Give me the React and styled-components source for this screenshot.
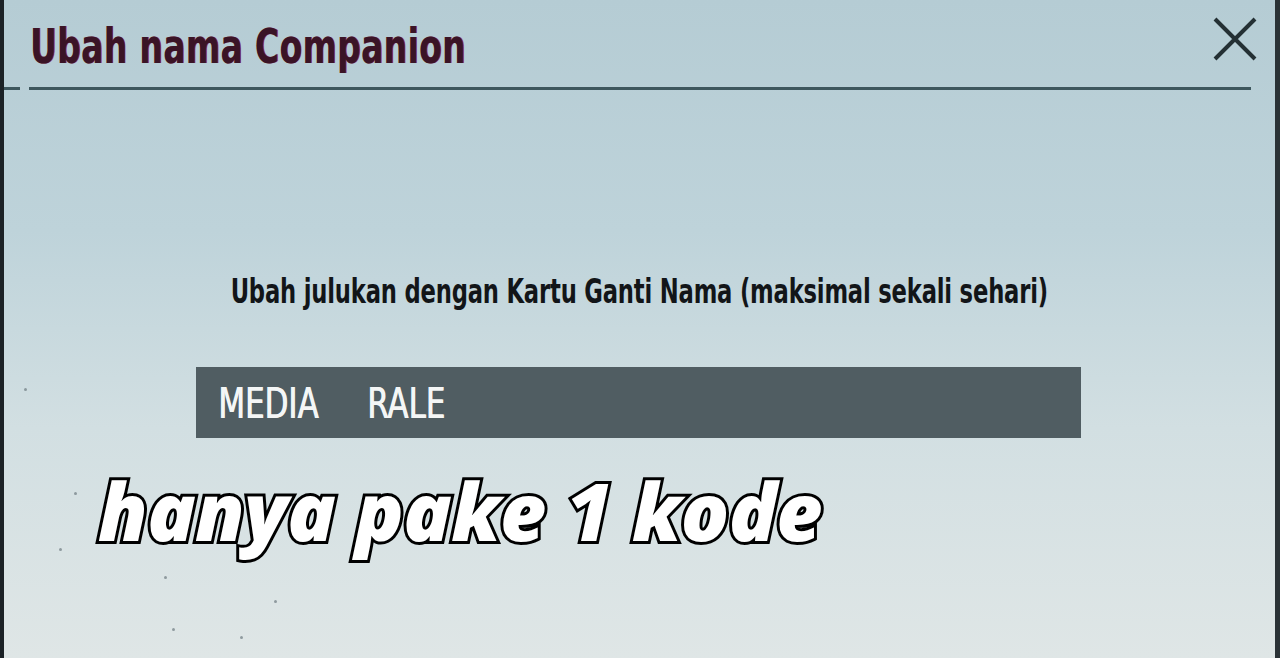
import React from "react";
import styled, { createGlobalStyle } from "styled-components";

const GlobalStyle = createGlobalStyle`
  html, body {
    margin: 0;
    padding: 0;
    width: 1280px;
    height: 658px;
    overflow: hidden;
  }
`;

const Screen = styled.div`
  position: relative;
  width: 1280px;
  height: 658px;
  box-sizing: border-box;
  background: linear-gradient(180deg, #b5ccd4 0%, #bed3da 35%, #d2dfe2 65%, #dfe6e6 100%);
  border-left: 4px solid #1c2226;
  border-right: 5px solid #2a3236;
  display: flex;
  flex-direction: column;
  overflow: hidden;
`;

const Header = styled.div`
  display: flex;
  align-items: center;
  justify-content: space-between;
  height: 86px;
  padding: 0 14px 0 26px;
`;

const Title = styled.h1`
  margin: 0;
  margin-top: 6px;
  font-family: "DejaVu Sans Condensed", "DejaVu Sans", sans-serif;
  font-weight: 700;
  font-size: 41px;
  letter-spacing: 0.5px;
  color: #3a1426;
  text-shadow: 1px 0 0 #8c2c48;
  transform: scale(0.89, 1.18);
  transform-origin: left center;
`;

const CloseButton = styled.button`
  width: 52px;
  height: 52px;
  border: none;
  background: none;
  padding: 0;
  margin-top: -8px;
  cursor: pointer;
`;

const Divider = styled.div`
  display: flex;
  align-items: center;
  gap: 9px;
  height: 4px;

  &::before {
    content: "";
    width: 16px;
    height: 3px;
    background: #3e575e;
  }
  &::after {
    content: "";
    width: 1222px;
    height: 3px;
    background: #3e575e;
  }
`;

const Body = styled.div`
  flex: 1;
  display: flex;
  flex-direction: column;
  align-items: center;
  padding-top: 186px;
`;

const Hint = styled.p`
  margin: 0;
  font-family: "DejaVu Sans Condensed", "DejaVu Sans", sans-serif;
  font-weight: 700;
  font-size: 26px;
  color: #121518;
  transform: scale(0.97, 1.3);
  letter-spacing: -0.2px;
`;

const NameField = styled.div`
  margin-top: 61px;
  margin-left: -2px;
  width: 885px;
  height: 71px;
  box-sizing: border-box;
  background: #505d62;
  display: flex;
  align-items: center;
  padding-left: 22px;
  gap: 46px;
`;

const NameWord = styled.span`
  font-family: "DejaVu Sans Condensed", "DejaVu Sans", sans-serif;
  font-weight: 400;
  font-size: 40px;
  color: #f4f6f6;
  text-shadow: 0.8px 0 0 #f4f6f6;
  transform: scale(0.86, 1.08);
  transform-origin: left center;
  margin-right: ${(p) => p.$trim || 0}px;
`;

const Caption = styled.div`
  position: absolute;
  left: 94px;
  top: 455px;
  font-family: "Open Sans", sans-serif;
  font-weight: 800;
  font-style: italic;
  font-size: 80px;
  letter-spacing: -0.6px;
  color: #ffffff;
  -webkit-text-stroke: 6px #000;
  paint-order: stroke fill;
  white-space: nowrap;
`;

const Speck = styled.span`
  position: absolute;
  width: 3px;
  height: 3px;
  border-radius: 50%;
  background: #6d7a80;
  opacity: 0.7;
`;

const specks = [
  [70, 492],
  [20, 388],
  [55, 548],
  [168, 628],
  [236, 636],
  [270, 600],
  [160, 576],
];

const App = () => {
  return (
    <>
      <GlobalStyle />
      <Screen>
        <Header>
          <Title>Ubah nama Companion</Title>
          <CloseButton aria-label="Tutup">
            <svg width="52" height="52" viewBox="0 0 52 52">
              <path
                d="M6 6 L46 46 M46 6 L6 46"
                stroke="#243034"
                strokeWidth="4"
                fill="none"
              />
            </svg>
          </CloseButton>
        </Header>
        <Divider />
        <Body>
          <Hint>Ubah julukan dengan Kartu Ganti Nama (maksimal sekali sehari)</Hint>
          <NameField>
            <NameWord $trim={-14}>MEDIA</NameWord>
            <NameWord>RALE</NameWord>
          </NameField>
        </Body>
        {specks.map(([x, y], i) => (
          <Speck key={i} style={{ left: x, top: y }} />
        ))}
        <Caption>hanya pake 1 kode</Caption>
      </Screen>
    </>
  );
};

export default App;
